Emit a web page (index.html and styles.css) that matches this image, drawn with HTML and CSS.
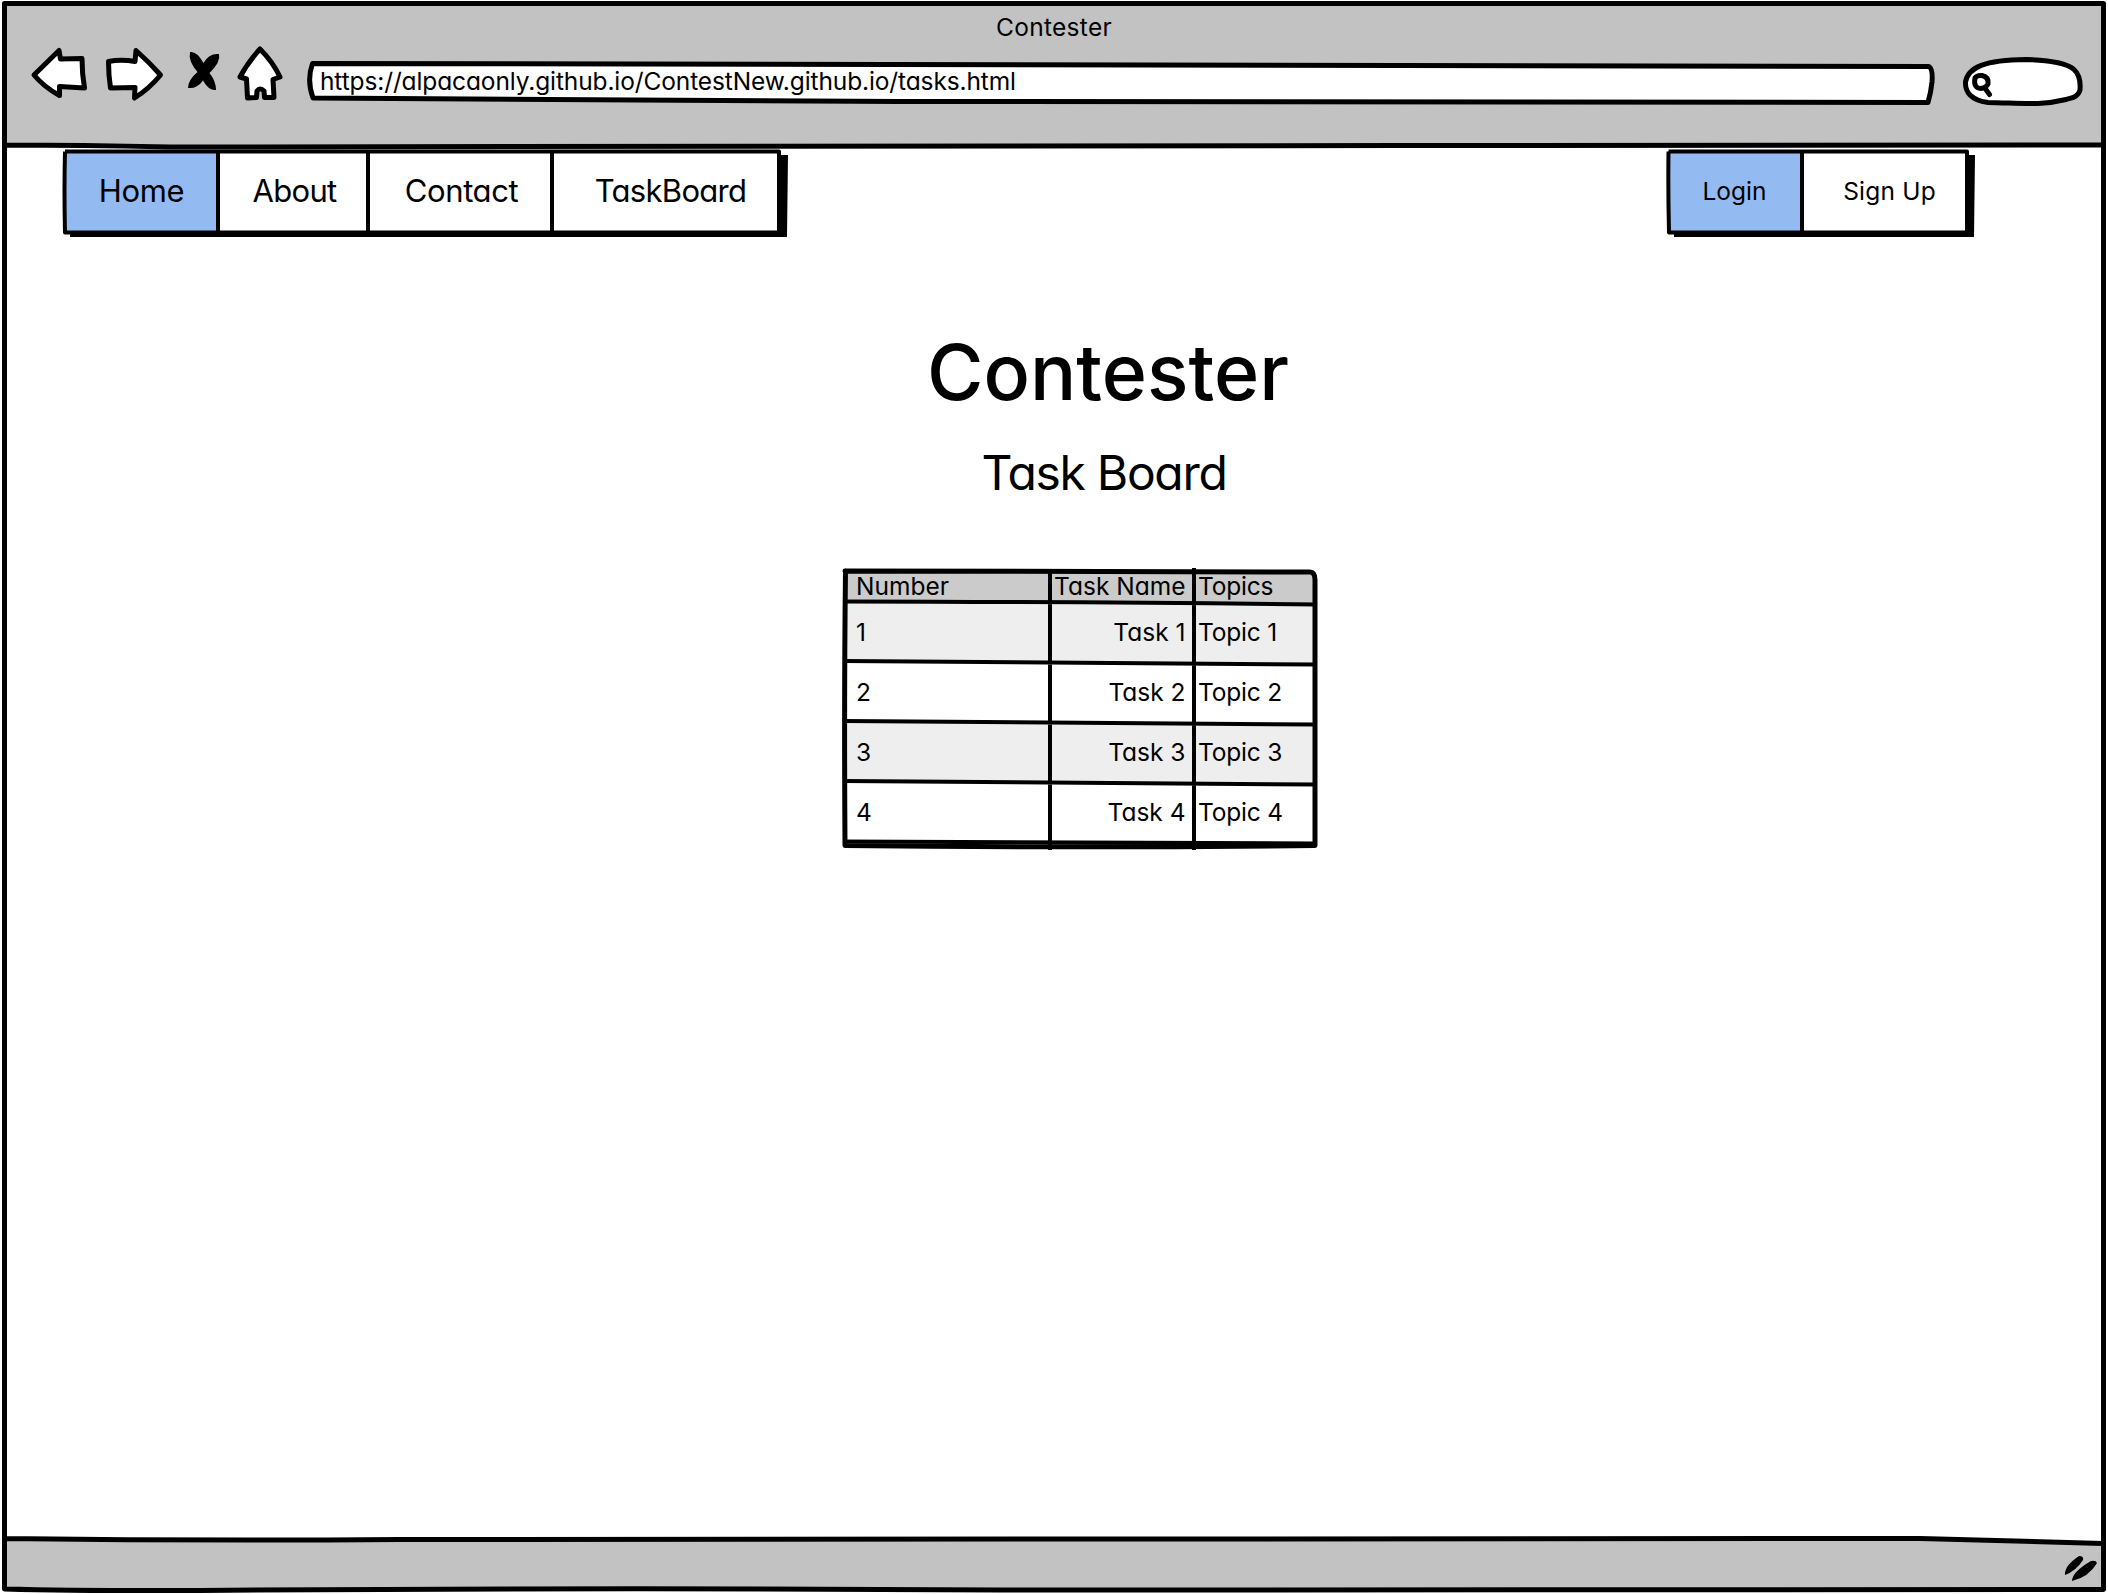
FILE: index.html
```html
<!DOCTYPE html>
<html lang="en">
<head>
<meta charset="utf-8">
<title>Contester</title>
<link rel="stylesheet" href="styles.css">
</head>
<body>
<div class="window">
  <header class="chrome">
    <div class="window-title">Contester</div>
    <div class="toolbar">
      <svg class="tools" viewBox="26 40 264 66" aria-hidden="true">
        <path class="ink" d="M34 75L59 50.500L60.500 59L82 58.500Q82 74 84.500 88L59.500 86.500L59.500 95.500Q44 87 34 75Z"/>
        <path class="ink" d="M108.500 61.500Q121 59 135 61.500L136 50.500Q150 63 160.500 75Q149 89 134.500 98L135 87.500L110.500 88Q108.500 75 108.500 61.500Z"/>
        <path class="solid" d="M190 52Q197 51 203.500 63Q209 53 219 54Q221 62 209.500 73Q216 81 216 90Q209 91 203 80.500Q197 89 188 88Q188 80 197.500 72Q188 61 190 52Z"/>
        <path class="ink" d="M260 49Q273 62 280 77L273 79.500L274 97.500L264.500 97.500L264 91Q260 87 257 91L256.500 97.500L247.500 98L246.500 79L240 77Q248 62 260 49Z"/>
      </svg>
      <div class="address">
        <svg class="sketch" viewBox="307 60 1628 46" aria-hidden="true"><path class="ink" d="M312.500 63.500Q1000 63 1929 66.500Q1933 69 1932 82Q1931 92 1928 102.500Q1100 103 900 101.500L313 98Q306.500 80 312.500 63.500Z"/></svg>
        <span class="url">https://alpacaonly.github.io/ContestNew.github.io/tasks.html</span>
      </div>
      <svg class="search" viewBox="1962 56 122 52" aria-hidden="true">
        <path class="ink" d="M1988 102.500C1970 100 1965 91 1965.500 82C1968 67 1985 60 2026 59.500C2050 60 2068 64 2074 69.500C2080 75 2080.500 84 2080 90C2078 98 2070 98 2066 99.500C2040 106 2020 103 1988 102.500Z"/>
        <path class="ink" d="M1975 78Q1977 75 1982 75.500Q1989 77 1988 84Q1986 88 1981 88.500Q1973 88 1975 78ZM1985.500 89L1989.500 94.500"/>
      </svg>
    </div>
  </header>
  <main class="page">
    <div class="menus">
      <nav class="menu menu-main">
        <svg class="sketch" viewBox="61 147 728 92" aria-hidden="true"><path class="solid" d="M70 233H777V155H788L787 237H70Z"/><path class="line" d="M65 151.500L779 151.500V232.500H65Q64 190 65 151.500M218 153V232M368 153V232M552 153V232"/></svg>
        <a class="item home active">Home</a>
        <a class="item about">About</a>
        <a class="item contact">Contact</a>
        <a class="item taskboard">TaskBoard</a>
      </nav>
      <nav class="menu menu-user">
        <svg class="sketch" viewBox="1665 147 312 92" aria-hidden="true"><path class="solid" d="M1674 233H1965V155H1975L1974 237H1674Z"/><path class="line" d="M1668.500 151.500L1967 151.500V232.500H1669Q1668 190 1668.500 151.500M1802 153V232"/></svg>
        <a class="item login active">Login</a>
        <a class="item signup">Sign Up</a>
      </nav>
    </div>
    <h1>Contester</h1>
    <h2>Task Board</h2>
    <div class="board">
      <div class="row head"><span>Number</span><span>Task Name</span><span>Topics</span></div>
      <div class="row odd"><span>1</span><span>Task 1</span><span>Topic 1</span></div>
      <div class="row"><span>2</span><span>Task 2</span><span>Topic 2</span></div>
      <div class="row odd"><span>3</span><span>Task 3</span><span>Topic 3</span></div>
      <div class="row"><span>4</span><span>Task 4</span><span>Topic 4</span></div>
      <svg class="sketch" viewBox="841 567 478 284" aria-hidden="true">
        <path class="ink open" d="M845 571L1310 572Q1315 572 1315 580L1315 845.500Q1080 848 845 845.500Q844 700 845.500 571"/>
        <path class="line" d="M843 601.500Q1100 602 1316 604.500M843 661Q1100 662 1316 664.500M843 721Q1100 722 1316 724.500M843 781Q1100 782 1316 784.500M843 841.500Q1100 842 1316 843.500M1050 569V850M1194 568V850"/>
      </svg>
    </div>
  </main>
  <footer class="status"></footer>
  <svg class="frame" viewBox="0 0 2108 1594" aria-hidden="true">
    <path class="ink open" d="M4.500 3.500H2103.500V1589.500Q1500 1591.500 1000 1590Q600 1587.500 200 1590.500Q80 1591 4.500 1589ZM4.500 145Q80 145 170 147Q900 147 1400 145.500L2103 145M4.500 1538.500Q200 1541 400 1539.500Q1200 1538 1920 1538.500Q2020 1541.500 2103 1543.500"/>
    <path class="solid" d="M2065 1575Q2064 1566 2079 1556Q2084 1556 2083 1560Q2076 1571 2065 1575ZM2072 1581Q2072 1572 2091 1561Q2096 1560 2097 1563Q2089 1577 2072 1581Z"/>
  </svg>
</div>
</body>
</html>
```
FILE: styles.css
```css
* { box-sizing: border-box; }

body {
  margin: 0;
  background: #fff;
  color: #000;
  font: 24.5px/30px Inter, "Open Sans", sans-serif;
  font-feature-settings: "cv11";
}

.window {
  position: relative;
  display: flex;
  flex-direction: column;
  width: 2108px;
  height: 1594px;
  padding: 4px 4px 5px;
}

.frame, .sketch { position: absolute; inset: 0; width: 100%; height: 100%; pointer-events: none; }
svg { overflow: visible; display: block; flex: none; }
.ink { fill: #fff; stroke: #000; stroke-width: 5; stroke-linejoin: round; stroke-linecap: round; }
.open, .line { fill: none; }
.line { stroke: #000; stroke-width: 4; stroke-linejoin: round; }
.solid { fill: #000; }

.chrome { height: 142px; background: #c2c2c2; }
.window-title { padding-top: 8px; height: 36px; text-align: center; letter-spacing: .3px; }
.toolbar { display: flex; padding-left: 22px; }
.tools { width: 264px; height: 66px; }
.address { position: relative; width: 1628px; height: 46px; margin: 20px 0 0 17px; padding: 6px 0 0 13px; }
.url { position: relative; letter-spacing: -.12px; }
.search { width: 122px; height: 52px; margin: 16px 0 0 27px; }

.page { flex: 1; }
.menus { display: flex; justify-content: space-between; padding: 5px 135px 0 61px; }
.menu { position: relative; display: flex; height: 82px; }
.menu .sketch { top: -4px; left: -4px; width: auto; height: 92px; }
.item { display: flex; align-items: center; justify-content: center; height: 100%; padding-bottom: 2px; }
.item.active { background: #94baf2; }
.menu-main { width: 714px; font-size: 31px; }
.home { width: 153px; letter-spacing: -.3px; }
.about { width: 150px; padding-left: 3px; letter-spacing: -.7px; }
.contact { width: 184px; padding-left: 3px; letter-spacing: -.4px; }
.taskboard { width: 227px; padding-left: 10px; letter-spacing: -.7px; }
.menu-user { width: 300px; }
.login { width: 133px; padding-right: 2px; }
.signup { width: 167px; padding-left: 8px; letter-spacing: .2px; }

h1, h2 { margin: 0; text-align: center; }
h1 { padding: 91px 0 0 108px; font-size: 77px; line-height: 96px; font-weight: 500; }
h2 { padding: 23px 0 0 100px; font-size: 48px; line-height: 60px; font-weight: 400; letter-spacing: -1.3px; }

.board { position: relative; width: 470px; margin: 68px 0 0 841px; }
.board .sketch { left: -4px; top: -4px; width: 478px; height: 284px; }
.row { display: grid; grid-template-columns: 205px 144px 121px; height: 60px; line-height: 58px; background: #fff; }
.row.head { height: 32px; line-height: 31px; background: #cbcbcb; }
.row.odd { background: #eee; }
.row span { padding-left: 11px; }
.row span:nth-child(2) { padding: 0 8.500px 0 0; text-align: right; }
.row span:nth-child(3) { padding-left: 4px; letter-spacing: -.2px; }

.status { height: 48px; background: #c2c2c2; }
```
